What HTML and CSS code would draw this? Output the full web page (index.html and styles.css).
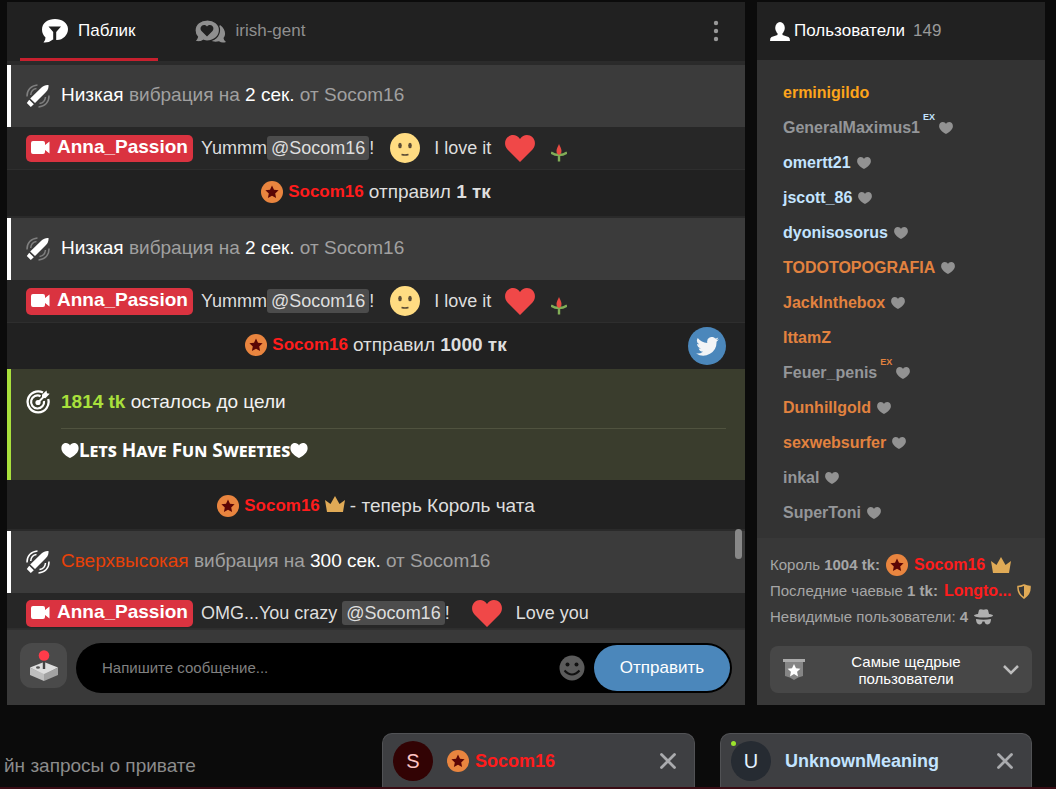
FILE: index.html
```html
<!DOCTYPE html>
<html lang="ru">
<head>
<meta charset="utf-8">
<title>Чат</title>
<link rel="stylesheet" href="styles.css">
</head>
<body>
<svg class="defs" aria-hidden="true">
  <symbol id="medal" viewBox="0 0 22 22"><circle cx="11" cy="11" r="11" fill="#e9853f"/><path fill="#5a0505" d="M11 4.500l2 4.200 4.600.6-3.400 3.200.9 4.600-4.100-2.300-4.100 2.300.9-4.600-3.400-3.200 4.600-.6z"/></symbol>
  <symbol id="crown" viewBox="0 0 20 16"><path fill="#e0aa56" d="M2 16L0 4l5.500 4L10 0l4.500 8L20 4l-2 12z"/></symbol>
  <symbol id="heart" viewBox="0 0 30 27"><path d="M15 27L2.500 14.500C-1 10.500-.5 5 2.500 2.200 6-1 12-.8 15 4c3-4.800 9-5 12.500-1.800 3 2.800 3.500 8.300 0 12.300z"/></symbol>
  <symbol id="fav" viewBox="0 0 14 12"><path d="M7 12C5 10.800 1 8.500.3 5.500-.5 2 1.500 0 3.800 0 5.200 0 6.300.7 7 1.900 7.700.7 8.800 0 10.200 0c2.300 0 4.300 2 3.500 5.500C13 8.500 9 10.800 7 12z"/></symbol>
  <symbol id="vibe" viewBox="0 0 24 24"><path fill="#fff" d="M4.200 14.500L15.500 3.500c2-2 4.500-2.800 7-2.500.3 2.500-.5 5-2.500 7L9 19zM3.200 15.700l4.600 4.600L4.800 23 .8 19z"/><g class="waves" fill="none" stroke="#fff" stroke-width="1.500"><path d="M1 12.500C.8 6 5 1.500 11.500 1M4.700 11C5 7.500 7 5 10.500 4.500"/><path d="M23 11.500c.2 6.500-4 11-10.500 11.500M19.500 13c-.3 3.500-2.500 6-6 6.500"/></g></symbol>
  <symbol id="camera" viewBox="0 0 19 13"><path fill="#fff" d="M2 0h10q2 0 2 2v2l4.500-3.500v12L14 9v2q0 2-2 2H2q-2 0-2-2V2q0-2 2-2z"/></symbol>
  <symbol id="face" viewBox="0 0 30 30"><circle cx="15" cy="15" r="15" fill="#ffdc82"/><ellipse cx="10" cy="12.500" rx="1.800" ry="2.800" fill="#5b4b35"/><ellipse cx="20" cy="12.500" rx="1.800" ry="2.800" fill="#5b4b35"/><path d="M11.500 21.500q3.500 1 7 0" fill="none" stroke="#5b4b35" stroke-width="1.500"/></symbol>
  <symbol id="tulip" viewBox="0 0 16 18"><path d="M8 17.500V9M8 11C5 11 2 10 0 8.500M8 11c3 0 6-1 8-2.500" fill="none" stroke="#82ad57" stroke-width="2.400"/><path fill="#e94b42" d="M8 0l1.800 4Q12 9 8 11 4 9 6.200 4z"/></symbol>
  <symbol id="close" viewBox="0 0 16 16"><path d="M1.500 1.500l13 13M14.500 1.500l-13 13" fill="none" stroke="#aaabae" stroke-width="2.800" stroke-linecap="round"/></symbol>
</svg>

<main class="room">
  <section class="panel chat">
    <header class="tabs">
      <button class="tab tab-active">
        <svg width="26" height="24" viewBox="0 0 26 24"><path fill="#fff" d="M13 0c7 0 13 4 13 10s-5 11-11 11q-2 0-4-.5Q7 24 1.500 23.500q2-2 2-5Q0 15 0 10.500C0 4 6 0 13 0z"/><path fill="#212121" d="M6.500 7.500h12.500l-4.800 5.500v8h-3v-8z"/></svg>
        <span>Паблик</span>
      </button>
      <button class="tab">
        <svg width="31" height="23" viewBox="0 0 31 23"><path fill="#8f8f8f" d="M25 5c6 4.500 6 10 3.500 13q0 2 2.500 4-4 1.500-7-.8-5 1.300-9-1z"/><path fill="#8f8f8f" stroke="#212121" stroke-width="1.200" d="M12.500 0C19 0 24.500 4 24.500 10s-5 11-12.500 11q-2 0-3.500-.8Q4 23 0 21q2-1.500 2.500-4Q0 14 0 10.500C0 4 5.500 0 12.500 0z"/><path fill="#212121" d="M12 16.500L6.500 11C3.500 7 8.500 2.500 12 6.500c3.500-4 8.500.5 5.500 4.500z"/></svg>
        <span>irish-gent</span>
      </button>
      <button class="more" aria-label="Меню"><svg width="6" height="22" viewBox="0 0 6 22" fill="#999"><circle cx="3" cy="3" r="2.200"/><circle cx="3" cy="11" r="2.200"/><circle cx="3" cy="19" r="2.200"/></svg></button>
    </header>

    <div class="feed">
      <div class="toy toy-low">
        <svg class="toy-icon"><use href="#vibe"/></svg>
        <p><b>Низкая</b> вибрация на <b>2 сек.</b> от Socom16</p>
      </div>
      <div class="message">
        <a class="model" href="#"><svg width="19" height="13"><use href="#camera"/></svg>Anna_Passion</a>
        <span class="said">Yummm<a class="mention" href="#">@Socom16</a>!</span>
        <svg class="emoji"><use href="#face"/></svg>
        <span class="said">I love it</span>
        <svg class="emoji-heart"><use href="#heart"/></svg>
        <svg class="tulip"><use href="#tulip"/></svg>
      </div>
      <div class="tip"><svg class="medal"><use href="#medal"/></svg><a class="king" href="#">Socom16</a><span>отправил <b>1 тк</b></span></div>
      <div class="toy toy-low">
        <svg class="toy-icon"><use href="#vibe"/></svg>
        <p><b>Низкая</b> вибрация на <b>2 сек.</b> от Socom16</p>
      </div>
      <div class="message">
        <a class="model" href="#"><svg width="19" height="13"><use href="#camera"/></svg>Anna_Passion</a>
        <span class="said">Yummm<a class="mention" href="#">@Socom16</a>!</span>
        <svg class="emoji"><use href="#face"/></svg>
        <span class="said">I love it</span>
        <svg class="emoji-heart"><use href="#heart"/></svg>
        <svg class="tulip"><use href="#tulip"/></svg>
      </div>
      <div class="tip"><svg class="medal"><use href="#medal"/></svg><a class="king" href="#">Socom16</a><span>отправил <b>1000 тк</b></span>
        <button class="twitter" aria-label="Twitter"><svg width="23" height="19" viewBox="0 0 24 20"><path fill="#f2f4f6" d="M24 2.400a10 10 0 0 1-2.800.8A5 5 0 0 0 23.300.500a10 10 0 0 1-3.100 1.200 4.900 4.900 0 0 0-8.400 4.500A14 14 0 0 1 1.700 1a4.900 4.900 0 0 0 1.500 6.600A5 5 0 0 1 1 7c0 2.300 1.600 4.400 3.900 4.900a5 5 0 0 1-2.200.1 4.900 4.900 0 0 0 4.600 3.400A10 10 0 0 1 0 17.400 14 14 0 0 0 21.500 4.900 10 10 0 0 0 24 2.400z"/></svg></button>
      </div>
      <div class="goal">
        <svg class="toy-icon" viewBox="0 0 24 24" fill="none" stroke="#fff"><path stroke-width="2.300" d="M17 2.600A10.500 10.500 0 1 0 22.200 9"/><path stroke-width="2.200" d="M14.500 6.200A6.500 6.500 0 1 0 18 11"/><circle cx="12" cy="12.500" r="2.600" fill="#fff" stroke="none"/><path stroke-width="2" d="M12 12.500l6-6"/><path fill="#fff" stroke="none" d="M16 7.500V4.800L20.500.5l.5 2.700 2.700.5-4.300 4.500z"/></svg>
        <div class="goal-text">
          <p><strong class="left">1814 tk</strong> осталось до цели</p>
          <h2><svg width="18" height="15"><use href="#fav"/></svg><span>Lets Have Fun Sweeties</span><svg width="18" height="15"><use href="#fav"/></svg></h2>
        </div>
      </div>
      <div class="tip crowned"><svg class="medal"><use href="#medal"/></svg><a class="king" href="#">Socom16</a><svg class="crown"><use href="#crown"/></svg><span>- теперь Король чата</span></div>
      <div class="toy">
        <svg class="toy-icon"><use href="#vibe"/></svg>
        <p><span class="ultra">Сверхвысокая</span> вибрация на <b>300 сек.</b> от Socom16</p>
      </div>
      <div class="message last">
        <a class="model" href="#"><svg width="19" height="13"><use href="#camera"/></svg>Anna_Passion</a>
        <span class="said">OMG...You crazy <a class="mention" href="#">@Socom16</a>!</span>
        <svg class="emoji-heart"><use href="#heart"/></svg>
        <span class="said">Love you</span>
      </div>
      <i class="thumb"></i>
    </div>

    <form class="compose">
      <button type="button" class="games" aria-label="Игры"><svg width="30" height="32" viewBox="0 0 30 32"><path fill="#dedede" d="M15 12l14 5.500L15 25 1 17.500z"/><path fill="#bfbfbf" d="M1 17.500L15 24v7L1 25z"/><path fill="#a2a2a2" d="M29 17.500L15 24v7l14-6z"/><ellipse cx="9" cy="17.500" rx="2" ry="1.300" fill="#555"/><path stroke="#444" stroke-width="2.400" d="M15 10v9"/><circle cx="15" cy="5.500" r="5.300" fill="#ff3b4a"/></svg></button>
      <div class="field">
        <input type="text" placeholder="Напишите сообщение..." aria-label="Сообщение">
        <button type="button" class="smile" aria-label="Смайлы"><svg width="26" height="26" viewBox="0 0 26 26"><circle cx="13" cy="13" r="12.500" fill="#5b5b5b"/><g fill="#111"><circle cx="8.500" cy="9.500" r="2"/><circle cx="17.500" cy="9.500" r="2"/></g><path d="M5.500 15.500q7.500 8 15 0" fill="none" stroke="#111" stroke-width="2"/></svg></button>
        <button type="button" class="send">Отправить</button>
      </div>
    </form>
  </section>

  <aside class="panel users">
    <header class="users-head">
      <svg width="20" height="19" viewBox="0 0 20 19" fill="#fff"><ellipse cx="10" cy="6" rx="4.800" ry="6"/><path d="M7.500 10h5v3l6 2q1.500.7 1.500 4H0q0-3.300 1.500-4l6-2z"/></svg>
      <h1>Пользователи</h1><span class="count">149</span>
    </header>
    <ul class="list">
      <li><a class="gold" href="#">erminigildo</a></li>
      <li><a class="grey" href="#">GeneralMaximus1</a><sup class="ice">EX</sup><svg class="fav"><use href="#fav"/></svg></li>
      <li><a class="ice" href="#">omertt21</a><svg class="fav"><use href="#fav"/></svg></li>
      <li><a class="ice" href="#">jscott_86</a><svg class="fav"><use href="#fav"/></svg></li>
      <li><a class="ice" href="#">dyonisosorus</a><svg class="fav"><use href="#fav"/></svg></li>
      <li><a class="bronze" href="#">TODOTOPOGRAFIA</a><svg class="fav"><use href="#fav"/></svg></li>
      <li><a class="bronze" href="#">JackInthebox</a><svg class="fav"><use href="#fav"/></svg></li>
      <li><a class="bronze" href="#">IttamZ</a></li>
      <li><a class="grey" href="#">Feuer_penis</a><sup class="bronze">EX</sup><svg class="fav"><use href="#fav"/></svg></li>
      <li><a class="bronze" href="#">Dunhillgold</a><svg class="fav"><use href="#fav"/></svg></li>
      <li><a class="bronze" href="#">sexwebsurfer</a><svg class="fav"><use href="#fav"/></svg></li>
      <li><a class="grey" href="#">inkal</a><svg class="fav"><use href="#fav"/></svg></li>
      <li><a class="grey" href="#">SuperToni</a><svg class="fav"><use href="#fav"/></svg></li>
    </ul>
    <footer class="stats">
      <p class="stat"><span>Король <b>1004 tk:</b></span><svg class="medal"><use href="#medal"/></svg><a class="king" href="#">Socom16</a><svg class="crown"><use href="#crown"/></svg></p>
      <p class="stat"><span>Последние чаевые <b>1 tk:</b></span><a class="king" href="#">Longto...</a><svg class="shield" viewBox="0 0 14 15"><path d="M7 1q3 1.500 6 1.500Q13.500 10 7 14 .5 10 1 2.500 4 2.500 7 1z" fill="none" stroke="#e0aa56" stroke-width="1.500"/><path fill="#e0aa56" d="M7 1q3 1.500 6 1.500Q13.500 10 7 14z"/></svg></p>
      <p class="stat"><span>Невидимые пользователи: <b>4</b></span><svg width="19" height="16" viewBox="0 0 19 16" fill="#b0b0b0"><path d="M4 5l1-4Q6-.5 9.500.7 13-.5 14 1l1 4q4 .7 4 1.500-1 2-9.500 2T0 6.500Q0 5.700 4 5zM2 10q7.500 1.500 15 0 0 5-3.500 5.500-2.500 0-3-3H8.500q-.5 3-3 3Q2 15 2 10z"/></svg></p>
      <button class="generous">
        <svg width="22" height="21" viewBox="0 0 22 21"><path fill="#858585" d="M2 3h18v14q-5 1-9 4-4-3-9-4z"/><path fill="#ababab" d="M0 0h22v3H0z"/><path fill="#fff" d="M11 5l2 4.200 4.400.5-3.300 3.100.9 4.600-4-2.300-4 2.300.9-4.600-3.300-3.100 4.400-.5z"/></svg>
        <span>Самые щедрые пользователи</span>
        <svg width="16" height="10" viewBox="0 0 16 10"><path d="M1 1l7 7 7-7" fill="none" stroke="#bdbdbd" stroke-width="2.500"/></svg>
      </button>
    </footer>
  </aside>
</main>

<div class="dock">
  <p class="ticker">йн запросы о привате</p>
  <section class="dialog">
    <span class="avatar avatar-s">S</span>
    <svg class="medal"><use href="#medal"/></svg><a class="king" href="#">Socom16</a>
    <button class="close" aria-label="Закрыть"><svg width="16" height="16"><use href="#close"/></svg></button>
  </section>
  <section class="dialog">
    <span class="avatar avatar-u">U<i class="online"></i></span>
    <a class="ice" href="#">UnknownMeaning</a>
    <button class="close" aria-label="Закрыть"><svg width="16" height="16"><use href="#close"/></svg></button>
  </section>
</div>
</body>
</html>
```
FILE: styles.css
```css
* { box-sizing: border-box; }
body {
  margin: 0;
  min-height: 100vh;
  display: flex;
  flex-direction: column;
  background: #0b0b0b;
  color: #dedede;
  font: 18px/24px "Liberation Sans", Arial, sans-serif;
  overflow: hidden;
}
p, h1, h2, ul { margin: 0; padding: 0; }
button { border: 0; padding: 0; margin: 0; background: none; color: inherit; font: inherit; cursor: pointer; }
a { color: inherit; text-decoration: none; }
svg { display: block; flex: none; }
.defs { position: absolute; width: 0; height: 0; }

.room {
  display: grid;
  grid-template-columns: minmax(0, 1fr) 288px;
  gap: 12px;
  padding: 2px 11px 0 7px;
}
.panel { display: flex; flex-direction: column; min-width: 0; background: #333; }

.tabs {
  display: flex;
  height: 61px;
  padding: 0 26px 0 13px;
  background: #212121;
  border-bottom: 2px solid #2b2b2b;
}
.tab {
  display: flex;
  align-items: center;
  gap: 10px;
  padding: 2px 22px 0;
  border-bottom: 3px solid transparent;
  color: #8f8f8f;
  font-size: 17px;
}
.tab + .tab { margin-left: 15px; }
.tab-active { color: #fff; border-bottom-color: #c7202e; }
.more { margin-left: auto; padding-bottom: 2px; }

.feed { position: relative; background: #212121; }
.toy {
  display: flex;
  align-items: center;
  gap: 11px;
  height: 64px;
  padding: 0 15px 0 19px;
  border-top: 2px solid #2a2a2a;
  box-shadow: inset 4px 0 #fff;
  background: #3b3b3b;
  color: #a0a0a0;
  font-size: 19px;
}
.toy p { padding-bottom: 2px; }
.toy b { font-weight: 400; color: #fff; }
.toy .ultra { color: #e84108; }
.toy-icon { width: 24px; height: 24px; }
.waves { stroke-opacity: var(--waves, 1); }
.toy-low { --waves: .35; }
.message {
  display: flex;
  align-items: center;
  height: 43px;
  padding: 0 19px;
  background: #272727;
  border-bottom: 1px solid #2e2e2e;
}
.last { height: 36px; padding-top: 5px; }
.model {
  display: flex;
  align-items: center;
  gap: 7px;
  height: 27px;
  margin-right: 8px;
  padding: 0 5px 2px;
  border-radius: 5px;
  background: #da3340;
  color: #fff;
  font-size: 19px;
  font-weight: 700;
}
.said { white-space: pre; }
.mention { display: inline-block; padding: 0 4px; border-radius: 3px; background: #4c4c4c; }
.emoji { width: 30px; height: 30px; margin: 0 14px 0 16px; }
.emoji-heart { width: 30px; height: 27px; margin-left: 14px; fill: #f04848; }
.last .emoji-heart { margin: 0 14px 0 22px; }
.tulip { width: 16px; height: 18px; margin: 10px 0 0 16px; }
.tip {
  position: relative;
  display: flex;
  align-items: center;
  justify-content: center;
  gap: 5px;
  height: 46px;
  padding-bottom: 2px;
  font-size: 19px;
}
.medal { width: 22px; height: 22px; }
.king { color: #ff1c1c; font-weight: 700; }
.tip .king { font-size: 17px; }
.crown { width: 20px; height: 16px; }
.twitter {
  position: absolute;
  right: 19px;
  top: 4px;
  display: grid;
  place-items: center;
  width: 38px;
  height: 38px;
  border-radius: 50%;
  background: #4b87bb;
}
.goal {
  display: flex;
  gap: 11px;
  height: 111px;
  padding: 21px 19px 0 15px;
  border-left: 4px solid #a9e03c;
  background: #3a3d2d;
  color: #f2f2f2;
  font-size: 19px;
}
.goal-text { flex: 1; }
.goal-text p { padding-bottom: 14px; border-bottom: 1px solid #50533f; }
.goal-text h2 {
  display: flex;
  align-items: center;
  padding-top: 9px;
  fill: #fff;
  color: #fff;
  font: 700 19px/24px "Noto Sans", sans-serif;
  font-variant: small-caps;
}
.left { color: #a9e03c; }
.crowned { height: 49px; padding: 2px 0 0; }
.crowned .crown { margin-bottom: 4px; }
.thumb {
  position: absolute;
  right: 3px;
  bottom: 70px;
  width: 7px;
  height: 30px;
  border-radius: 4px;
  background: #888;
}

.compose {
  display: flex;
  flex: 1;
  gap: 9px;
  padding: 13px 13px 12px;
  border-top: 1px solid #303030;
  background: #393939;
}
.games { display: grid; place-items: center; width: 47px; height: 45px; border-radius: 12px; background: #4a4a4a; }
.field {
  display: flex;
  align-items: center;
  flex: 1;
  height: 50px;
  padding: 0 2px 0 26px;
  border-radius: 25px;
  background: #000;
}
.field input {
  flex: 1;
  min-width: 0;
  padding: 0;
  border: 0;
  outline: 0;
  background: none;
  color: #ddd;
  font: 15px/24px "Liberation Sans", Arial, sans-serif;
}
.field input::placeholder { color: #808080; opacity: 1; }
.smile { margin-right: 9px; }
.send { width: 136px; height: 46px; border-radius: 23px; background: #4b87bb; color: #fff; font-size: 17px; }

.users-head {
  display: flex;
  align-items: center;
  gap: 4px;
  height: 58px;
  padding: 0 13px;
  background: #212121;
}
.users-head h1 { color: #fff; font-size: 17px; font-weight: 400; }
.count { margin-left: 4px; color: #999; font-size: 17px; }
.list {
  flex: 1;
  padding: 15px 26px 0;
  list-style: none;
  font-size: 16px;
  font-weight: 700;
}
.list li { display: flex; align-items: center; height: 35px; }
.list sup { align-self: flex-start; margin-left: 3px; font-size: 9px; line-height: 14px; }
.fav { width: 14px; height: 12px; margin-left: 6px; fill: #929292; }
.list sup + .fav { margin-left: 4px; }
.gold { color: #fda41b; }
.grey { color: #949699; }
.ice { color: #c3e4ff; }
.bronze { color: #e2823f; }

.stats { padding: 14px 13px 12px; background: #383838; color: #a6a6a6; font-size: 15px; }
.stat { display: flex; align-items: center; gap: 6px; height: 26px; white-space: pre; }
.stat .king { font-size: 16px; }
.shield { width: 14px; height: 15px; }
.generous {
  display: flex;
  align-items: center;
  width: 100%;
  height: 47px;
  margin-top: 16px;
  padding: 0 13px;
  border-radius: 8px;
  background: #474747;
  color: #fff;
  font-size: 15px;
  line-height: 17px;
}
.generous span { flex: 1; padding: 0 40px 0 44px; }

.dock {
  display: grid;
  grid-template-columns: minmax(0, 1fr) 313px 312px;
  gap: 25px;
  flex: 1;
  margin-top: 28px;
  padding-right: 24px;
  border-bottom: 2px solid #3a0c14;
}
.ticker {
  align-self: center;
  padding: 12px 0 0 4px;
  white-space: nowrap;
  color: #8c8c8c;
  font-size: 19px;
}
.dialog {
  display: flex;
  align-items: center;
  padding: 0 18px 0 10px;
  border: 1px solid #515255;
  border-bottom: 0;
  border-radius: 10px 10px 0 0;
  background: #3e3f42;
  font-size: 18px;
  font-weight: 700;
}
.dialog .medal { margin-right: 6px; }
.avatar {
  position: relative;
  display: grid;
  place-items: center;
  width: 40px;
  height: 40px;
  margin-right: 14px;
  border-radius: 50%;
  font-size: 20px;
  font-weight: 400;
}
.avatar-s { background: #320304; color: #ffc4c4; }
.avatar-u { background: #262b32; color: #e2f1ff; }
.online { position: absolute; left: 0; top: 0; width: 5px; height: 5px; border-radius: 50%; background: #9be22c; }
.close { margin-left: auto; }
```
